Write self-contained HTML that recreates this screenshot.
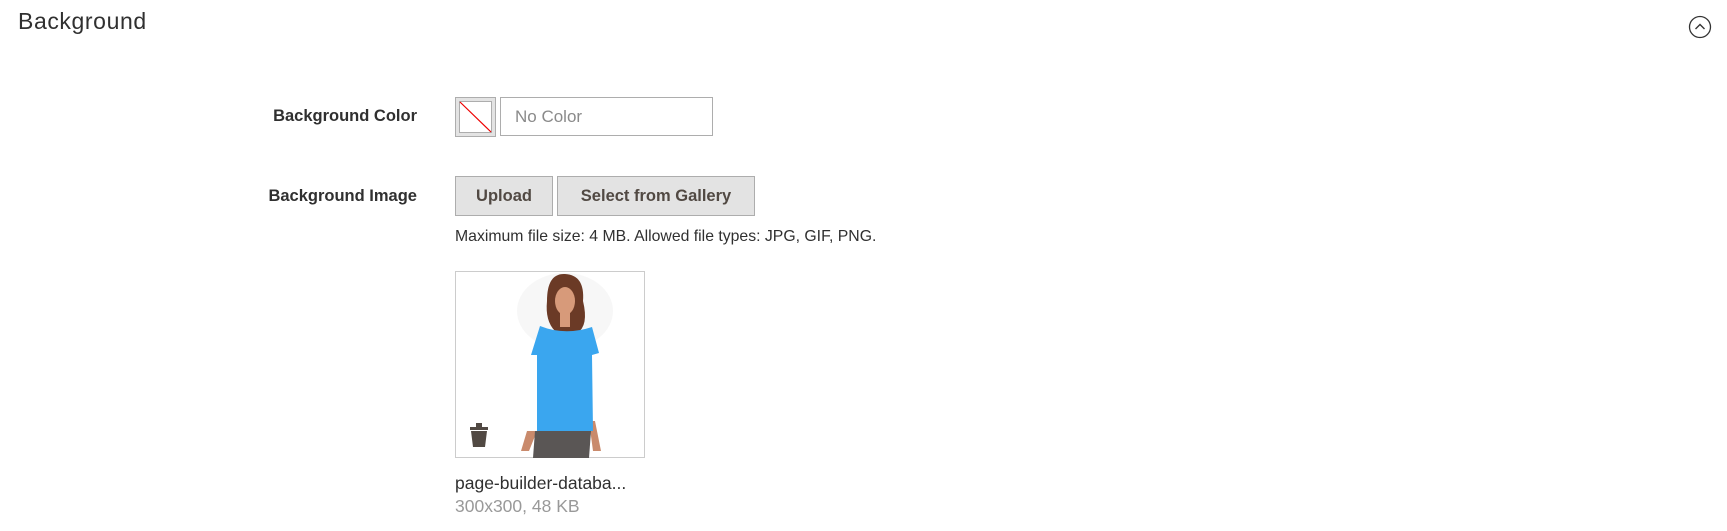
<!DOCTYPE html>
<html><head><style>
body{margin:0;width:1727px;height:531px;background:#fff;font-family:"Liberation Sans",sans-serif;color:#303030;position:relative;overflow:hidden}
.a{position:absolute;white-space:nowrap}
.lbl{font-size:16.5px;font-weight:bold;color:#303030;text-align:right;width:300px;left:117px}
.btn{position:absolute;background:#e3e3e3;border:1px solid #adadad;box-sizing:border-box;font-size:16.5px;font-weight:bold;color:#514943;text-align:center;line-height:38px;height:40px;top:176px}
</style></head><body>
<div class="a" style="left:18px;top:8px;font-size:23px;letter-spacing:0.6px;color:#303030">Background</div>
<svg class="a" style="left:1688px;top:15px" width="24" height="24"><circle cx="12" cy="12" r="10.5" fill="none" stroke="#333" stroke-width="1.3"/><path d="M7.5 14 L12 9.5 L16.5 14" fill="none" stroke="#333" stroke-width="1.4"/></svg>
<div class="a lbl" style="top:107px">Background Color</div>
<div class="a" style="left:455px;top:97px;width:41px;height:40px;background:#e3e3e3;border:1px solid #adadad;box-sizing:border-box"></div>
<svg class="a" style="left:459px;top:101px" width="33" height="32"><rect x="0.5" y="0.5" width="32" height="31" fill="#fff" stroke="#adadad"/><line x1="1" y1="1" x2="32" y2="31" stroke="#e00" stroke-width="1.2"/></svg>
<div class="a" style="left:500px;top:97px;width:213px;height:39px;border:1px solid #adadad;box-sizing:border-box;font-size:17px;color:#8a8a8a;line-height:37px;padding-left:14px">No Color</div>
<div class="a lbl" style="top:187px">Background Image</div>
<div class="btn" style="left:455px;width:98px">Upload</div>
<div class="btn" style="left:557px;width:198px">Select from Gallery</div>
<div class="a" style="left:455px;top:228px;font-size:15.8px;color:#303030">Maximum file size: 4 MB. Allowed file types: JPG, GIF, PNG.</div>
<svg class="a" style="left:455px;top:271px" width="190" height="187">
<rect x="0.5" y="0.5" width="189" height="186" fill="#fff" stroke="#ccc"/>
<ellipse cx="110" cy="40" rx="48" ry="38" fill="#f7f7f7"/>
<path d="M92 30 Q92 2 110 3 Q130 4 128 30 Q134 55 122 62 L100 60 Q90 50 92 30Z" fill="#6b3a26"/>
<ellipse cx="110" cy="30" rx="10" ry="14" fill="#d79a7a"/>
<rect x="105" y="40" width="10" height="16" fill="#d79a7a"/>
<path d="M72 160 L66 180 L74 180 L82 160Z M140 150 L146 180 L138 180 L134 150Z" fill="#c98a6c"/>
<path d="M85 55 Q110 65 137 56 L144 82 L137 84 L138 160 L82 160 L82 84 L76 84Z" fill="#3aa6ef"/>
<path d="M80 160 L136 160 L134 187 L78 187Z" fill="#5a5655"/>
<path d="M15 156 L33 156 L33 159 L15 159Z M21 152 L27 152 L27 156 L21 156Z M16 160 L32 160 L30 176 L18 176Z" fill="#514943"/>
</svg>
<div class="a" style="left:455px;top:473px;font-size:17.5px;color:#303030">page-builder-databa...</div>
<div class="a" style="left:455px;top:496px;font-size:17.5px;color:#999">300x300, 48 KB</div>
</body></html>
